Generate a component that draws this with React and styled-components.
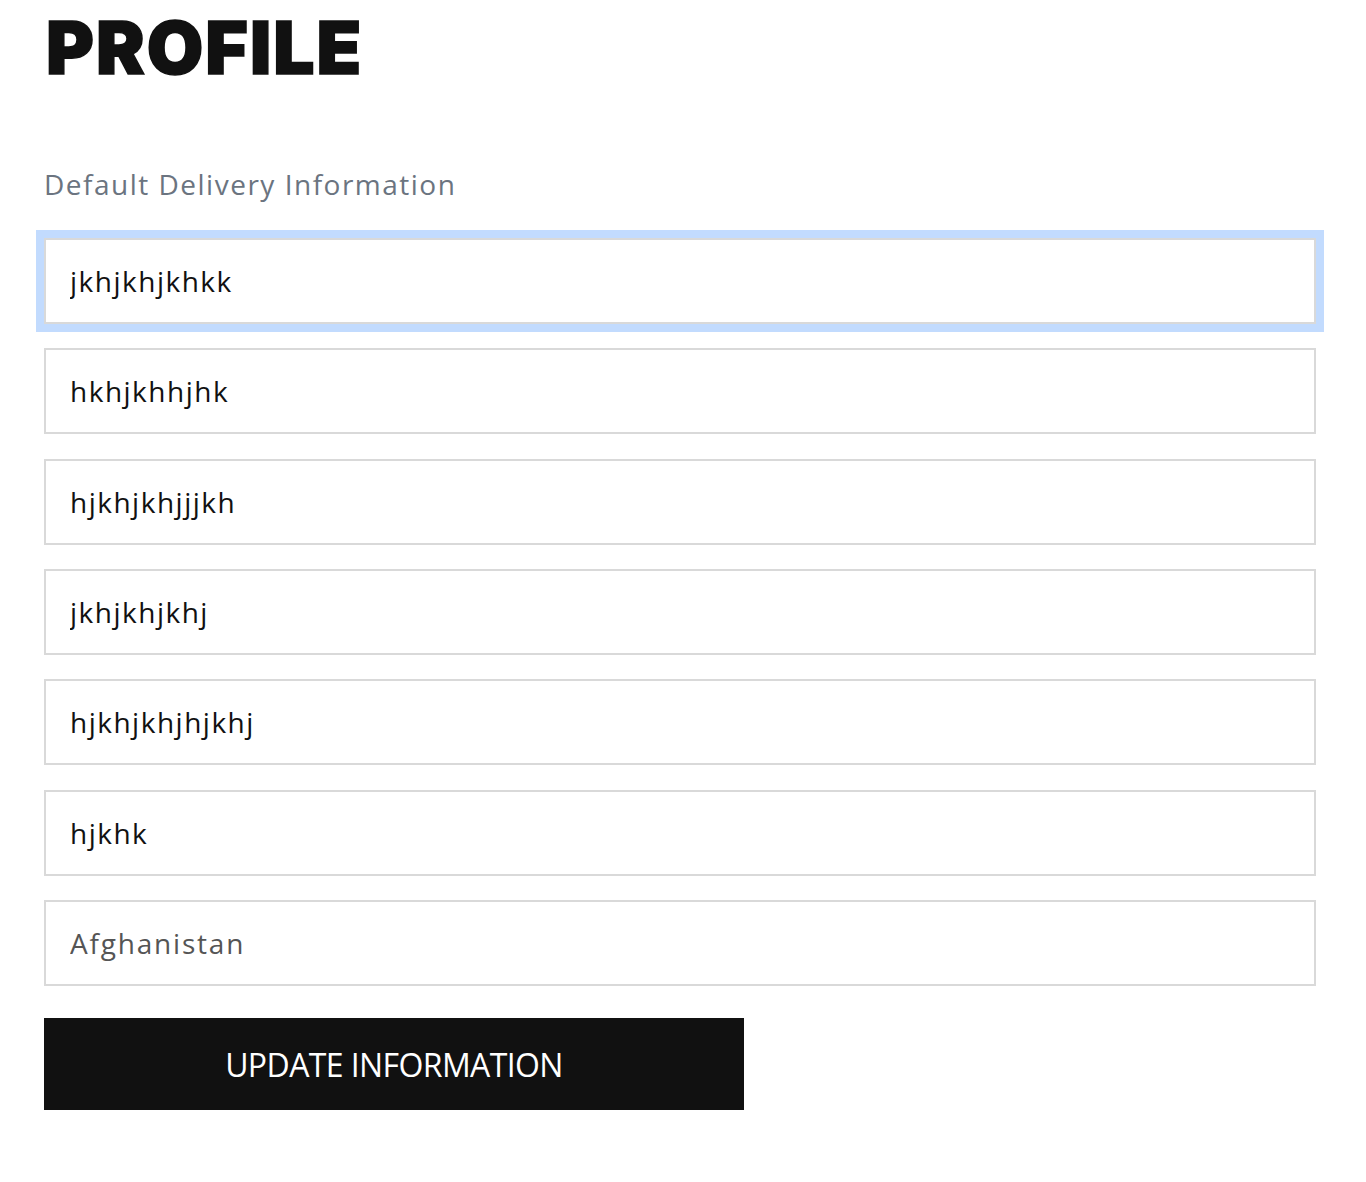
import React from "react";
import styled, { createGlobalStyle } from "styled-components";

const Global = createGlobalStyle`
  html, body { margin: 0; padding: 0; background: #fff; }
  body { font-family: "Open Sans", "Liberation Sans", sans-serif; }
`;

const Page = styled.div`
  padding: 12px 50px 60px 44px;
  display: flex;
  flex-direction: column;
`;

const Title = styled.h1`
  margin: 0 0 0 2px;
  font-family: Inter, "Liberation Sans", sans-serif;
  font-weight: 900;
  font-size: 73px;
  line-height: 72px;
  letter-spacing: 2px;
  -webkit-text-stroke: 1.5px #111;
  color: #111;
`;

const Subtitle = styled.h2`
  margin: 82px 0 36px;
  font-family: "Open Sans", sans-serif;
  font-weight: 400;
  font-size: 28px;
  line-height: 36px;
  letter-spacing: 1.5px;
  color: #6b7480;
`;

const Form = styled.form`
  display: flex;
  flex-direction: column;
  gap: 24.33px;
  margin: 0;
`;

const Field = styled.input`
  box-sizing: border-box;
  width: 1272px;
  height: 86px;
  border: 2px solid #d9d9d9;
  padding: 0 24px;
  font-family: "Open Sans", sans-serif;
  font-size: 28px;
  letter-spacing: 1.5px;
  color: #111;
  background: #fff;
  outline: ${(p) => (p.$focused ? "8px solid #c2dbfe" : "none")};
  outline-offset: 0;
`;

const Select = styled.select`
  box-sizing: border-box;
  width: 1272px;
  height: 86px;
  border: 2px solid #d9d9d9;
  padding: 0 24px;
  font-family: "Open Sans", sans-serif;
  font-size: 28px;
  letter-spacing: 1.8px;
  color: #555;
  background: #fff;
  appearance: none;
  -webkit-appearance: none;
  border-radius: 0;
  outline: none;
`;

const Button = styled.button`
  margin-top: 8px;
  width: 700px;
  height: 92px;
  border: none;
  background: #111;
  color: #fff;
  font-family: "Open Sans", sans-serif;
  font-size: 32px;
  letter-spacing: -0.6px;
  cursor: pointer;
`;

const values = [
  "jkhjkhjkhkk",
  "hkhjkhhjhk",
  "hjkhjkhjjjkh",
  "jkhjkhjkhj",
  "hjkhjkhjhjkhj",
  "hjkhk",
];

export default function App() {
  return (
    <>
      <Global />
      <Page>
        <Title>PROFILE</Title>
        <Subtitle>Default Delivery Information</Subtitle>
        <Form onSubmit={(e) => e.preventDefault()}>
          {values.map((v, i) => (
            <Field key={i} defaultValue={v} $focused={i === 0} />
          ))}
          <Select defaultValue="Afghanistan">
            <option>Afghanistan</option>
          </Select>
          <Button type="submit">UPDATE INFORMATION</Button>
        </Form>
      </Page>
    </>
  );
}
